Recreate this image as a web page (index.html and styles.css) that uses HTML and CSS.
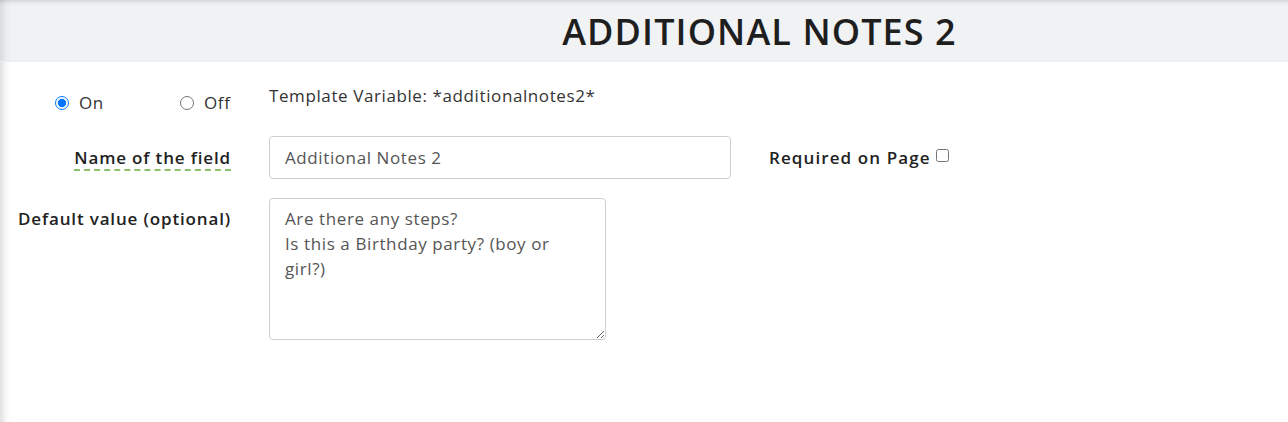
FILE: index.html
```html
<!DOCTYPE html>
<html>
<head>
<meta charset="utf-8">
<link rel="stylesheet" href="styles.css">
</head>
<body>
<div class="page">
  <header class="page-header">
    <h1 class="title">ADDITIONAL NOTES 2</h1>
  </header>
  <div class="form">
    <div class="row row-toggle">
      <div class="label-col toggle-col">
        <label class="radio-opt on"><input type="radio" name="state" checked> On</label>
        <label class="radio-opt off"><input type="radio" name="state"> Off</label>
      </div>
      <div class="field-col">
        <span class="template-var">Template Variable: *additionalnotes2*</span>
      </div>
    </div>
    <div class="row row-name">
      <div class="label-col">
        <span class="field-label dashed">Name of the field</span>
      </div>
      <div class="field-col field-inline">
        <input class="text-input" type="text" value="Additional Notes 2">
        <label class="required">Required on Page <input type="checkbox"></label>
      </div>
    </div>
    <div class="row row-default">
      <div class="label-col">
        <span class="field-label top">Default value (optional)</span>
      </div>
      <div class="field-col">
        <textarea class="text-area">Are there any steps?
Is this a Birthday party? (boy or girl?)</textarea>
      </div>
    </div>
  </div>
</div>
</body>
</html>
```

FILE: styles.css
```css
html, body {
  margin: 0;
  padding: 0;
  background: #ffffff;
}

body {
  font-family: "Open Sans", "Noto Sans", sans-serif;
  color: #222;
  height: 422px;
  box-shadow: inset 12px 0 10px -10px rgba(0, 0, 0, 0.18);
}

.page {
  min-height: 422px;
}

.page-header {
  height: 62px;
  background: #f1f2f4;
  box-shadow: inset 0 5px 5px -4px rgba(0, 0, 0, 0.18), inset 12px 0 10px -10px rgba(0, 0, 0, 0.15);
  border-bottom: 1px solid #eceef0;
  box-sizing: border-box;
  padding-left: 231px;
  display: flex;
  align-items: center;
  justify-content: center;
}

.title {
  margin: 0;
  font-size: 36px;
  font-weight: 600;
  color: #1e1e1e;
  letter-spacing: 1.1px;
  line-height: 1;
  padding-top: 2px;
}

.form {
  display: flex;
  flex-direction: column;
}

.row {
  display: flex;
  gap: 38px;
}

.label-col {
  width: 231px;
  flex: none;
  text-align: right;
}

.row-toggle {
  margin-top: 22px;
  height: 31px;
}

.toggle-col {
  display: flex;
  align-items: flex-end;
  justify-content: flex-start;
  padding-left: 50px;
  box-sizing: border-box;
  gap: 0;
}

.radio-opt {
  display: inline-flex;
  align-items: center;
  font-size: 17px;
  letter-spacing: 0.6px;
  color: #333;
  line-height: 24px;
}

.radio-opt input {
  margin: 0 10px 0 5px;
  width: 14px;
  height: 14px;
}

.radio-opt.on {
  width: 125px;
}

.template-var {
  font-size: 17px;
  letter-spacing: 0.6px;
  color: #333;
  line-height: 24px;
  display: block;
}

.row-name {
  margin-top: 21px;
  align-items: center;
}

.field-label {
  font-size: 17px;
  font-weight: 600;
  letter-spacing: 0.85px;
  color: #222;
  line-height: 24px;
}

.field-label.dashed {
  border-bottom: 2px dashed #8cc26a;
  padding-bottom: 0;
}

.field-inline {
  display: flex;
  align-items: center;
  gap: 38px;
}

.text-input {
  width: 462px;
  height: 43px;
  box-sizing: border-box;
  border: 1px solid #cfcfcf;
  border-radius: 4px;
  padding: 0 15px;
  font-family: inherit;
  font-size: 17px;
  letter-spacing: 0.6px;
  color: #555;
  background: #fff;
  outline: none;
}

.required {
  font-size: 17px;
  font-weight: 600;
  letter-spacing: 1.1px;
  color: #222;
  display: inline-flex;
  align-items: center;
}

.required input {
  margin: 0 0 4px 5px;
  width: 13px;
  height: 13px;
}

.row-default {
  margin-top: 19px;
}

.field-label.top {
  display: block;
  padding-top: 9px;
}

.text-area {
  width: 337px;
  height: 142px;
  box-sizing: border-box;
  border: 1px solid #cfcfcf;
  border-radius: 4px;
  padding: 7px 15px;
  font-family: inherit;
  font-size: 17px;
  letter-spacing: 0.6px;
  line-height: 25px;
  color: #555;
  resize: both;
  outline: none;
}
```
